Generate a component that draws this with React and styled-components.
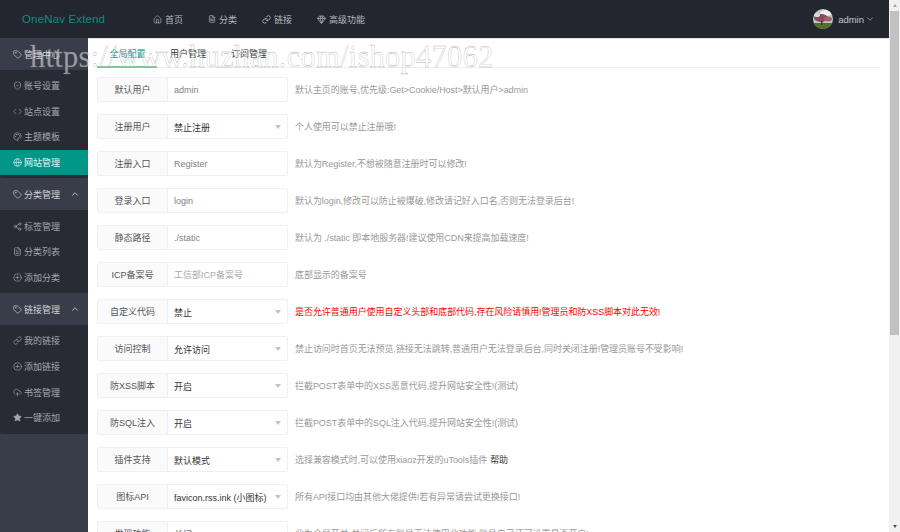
import styled, { createGlobalStyle } from 'styled-components';
import { ChevronDown, ChevronUp, Link, Share2, Star, Tag, ShieldCheck, Code, Palette, Globe, Home, Gem, FileText, CloudUpload, CirclePlus } from 'lucide-react';

const GlobalStyle = createGlobalStyle`
   html, body {
      margin: 0;
      height: 100%;
      overflow: hidden;
      background: #fff;
   }
   * {
      box-sizing: border-box;
   }
   #root {
      height: 100%;
   }
`;

const Page = styled.div`
   position: relative;
   display: flex;
   height: 532px;
   overflow: hidden;
   font-family: "Liberation Sans", "Noto Sans CJK SC", sans-serif;
   font-size: 9px;
`;

const Frame = styled.div`
   flex: 1;
   min-width: 0;
   display: flex;
   flex-direction: column;
`;

const Header = styled.header`
   flex: none;
   height: 38px;
   display: flex;
   align-items: center;
   background: #23262f;
`;

const Logo = styled.div`
   width: 153px;
   padding-left: 22px;
   color: #0a8f7c;
   font-size: 11.5px;
   letter-spacing: 0.15px;
`;

const TopNav = styled.nav`
   display: flex;
   flex: 1;
   gap: 25px;
`;

const TopLink = styled.a`
   display: flex;
   align-items: center;
   gap: 3px;
   color: #b5b8bd;
   font-size: 9px;
`;

const User = styled.div`
   display: flex;
   align-items: center;
   padding-right: 14px;
   color: #c2c5ca;
   font-size: 9.5px;
`;

const UserCaret = styled(ChevronDown)`
   margin-left: 1px;
`;

const Avatar = styled.svg`
   width: 20px;
   height: 20px;
   margin-right: 5px;
   border-radius: 50%;
`;

const Body = styled.div`
   flex: 1;
   min-height: 0;
   display: flex;
`;

const Sidebar = styled.aside`
   flex: none;
   width: 88px;
   background: #393d49;
`;

const GroupTitle = styled.div`
   height: 32px;
   display: flex;
   align-items: center;
   gap: 2px;
   padding-left: 13px;
   color: #d0d2d6;
`;

const Caret = styled(ChevronUp)`
   margin-left: 8px;
`;

const SubMenu = styled.div`
   padding: 3px 0;
   background: #282b33;
   border-radius: 0 0 2px 2px;
`;

const MenuItem = styled.div`
   height: 25.6px;
   display: flex;
   align-items: center;
   gap: 2px;
   padding-left: 13px;
   color: ${p => (p.$active ? '#e6f4f2' : '#a3a6ac')};
   background: ${p => (p.$active ? '#009688' : 'transparent')};
`;

const Main = styled.main`
   flex: 1;
   min-width: 0;
   padding: 0 9px;
   background: #fff;
   border-top: 1px solid #e4e4e4;
   overflow: hidden;
`;

const Tabs = styled.div`
   display: flex;
   height: 29px;
   border-bottom: 1px solid #eee;
`;

const Tab = styled.div`
   width: ${p => (p.$active ? '60px' : '61px')};
   height: 29px;
   padding-top: 8px;
   padding-left: 1px;
   text-align: center;
   color: ${p => (p.$active ? '#009688' : '#333')};
   border-bottom: ${p => (p.$active ? '2px solid #7fc79a' : 'none')};
`;

const Form = styled.div`
   padding-top: 9px;
`;

const Row = styled.div`
   height: 37px;
   display: flex;
   align-items: flex-start;
`;

const Field = styled.div`
   flex: none;
   width: 191px;
   height: 25px;
   display: flex;
   border: 1px solid #f0f0f0;
   border-radius: 2px;
`;

const Label = styled.div`
   flex: none;
   width: 70px;
   padding-bottom: 1px;
   display: flex;
   align-items: center;
   justify-content: center;
   color: #555;
   background: #fafafa;
   border-right: 1px solid #eee;
`;

const Value = styled.div`
   flex: 1;
   display: flex;
   align-items: center;
   justify-content: space-between;
   padding: ${p => (p.$select ? '1px 6px 0 6px' : '0 6px')};
   color: ${p => (p.$select ? '#333' : p.$placeholder ? '#aaa' : '#808080')};
   white-space: nowrap;
`;

const Arrow = styled.span`
   width: 0;
   height: 0;
   border-style: solid;
   border-width: 4px 3.5px 0;
   border-color: #c2c2c2 transparent transparent;
`;

const Hint = styled.div`
   height: 25px;
   padding-bottom: 1px;
   display: flex;
   align-items: center;
   margin-left: 7px;
   white-space: nowrap;
   letter-spacing: -0.05px;
   color: ${p => (p.$danger ? '#f00' : '#999')};
`;

const HelpLink = styled.a`
   margin-left: 3px;
   color: #333;
`;

const ScrollBar = styled.div`
   flex: none;
   width: 11px;
   display: flex;
   flex-direction: column;
   align-items: center;
   background: #f1f1f1;
`;

const ScrollUp = styled.span`
   flex: none;
   margin-top: 4px;
   width: 0;
   height: 0;
   border-style: solid;
   border-width: 0 2.5px 3px;
   border-color: transparent transparent #a3a3a3;
`;

const ScrollThumb = styled.div`
   flex: none;
   width: 9px;
   height: 324px;
   margin-top: 4px;
   background: #c1c1c1;
`;

const ScrollDown = styled.span`
   flex: none;
   margin-top: auto;
   margin-bottom: 4px;
   width: 0;
   height: 0;
   border-style: solid;
   border-width: 3px 2.5px 0;
   border-color: #505050 transparent transparent;
`;

const Watermark = styled.div`
   position: absolute;
   left: 30px;
   top: 40px;
   font-family: "Liberation Serif", serif;
   font-size: 30.5px;
   letter-spacing: 0.24px;
   white-space: nowrap;
   color: rgba(255, 255, 255, 0.5);
   -webkit-text-stroke: 0.35px rgba(120, 120, 120, 0.6);
   pointer-events: none;
`;

const menus = [
   {
      title: '管理中心',
      items: [
         { icon: ShieldCheck, text: '账号设置' },
         { icon: Code, text: '站点设置' },
         { icon: Palette, text: '主题模板' },
         { icon: Globe, text: '网站管理', active: true },
      ],
   },
   {
      title: '分类管理',
      caret: true,
      items: [
         { icon: Share2, text: '标签管理' },
         { icon: FileText, text: '分类列表' },
         { icon: CirclePlus, text: '添加分类' },
      ],
   },
   {
      title: '链接管理',
      caret: true,
      items: [
         { icon: Link, text: '我的链接' },
         { icon: CirclePlus, text: '添加链接' },
         { icon: CloudUpload, text: '书签管理' },
         { icon: Star, text: '一键添加', fill: true },
      ],
   },
];

const rows = [
   { label: '默认用户', value: 'admin', hint: '默认主页的账号,优先级:Get>Cookie/Host>默认用户>admin' },
   { label: '注册用户', value: '禁止注册', select: true, hint: '个人使用可以禁止注册哦!' },
   { label: '注册入口', value: 'Register', hint: '默认为Register,不想被随意注册时可以修改!' },
   { label: '登录入口', value: 'login', hint: '默认为login,修改可以防止被爆破,修改请记好入口名,否则无法登录后台!' },
   { label: '静态路径', value: './static', hint: '默认为 ./static 即本地服务器!建议使用CDN来提高加载速度!' },
   { label: 'ICP备案号', value: '工信部ICP备案号', placeholder: true, hint: '底部显示的备案号' },
   { label: '自定义代码', value: '禁止', select: true, danger: true, hint: '是否允许普通用户使用自定义头部和底部代码,存在风险请慎用!管理员和防XSS脚本对此无效!' },
   { label: '访问控制', value: '允许访问', select: true, hint: '禁止访问时首页无法预览,链接无法跳转,普通用户无法登录后台,同时关闭注册!管理员账号不受影响!' },
   { label: '防XSS脚本', value: '开启', select: true, hint: '拦截POST表单中的XSS恶意代码,提升网站安全性!(测试)' },
   { label: '防SQL注入', value: '开启', select: true, hint: '拦截POST表单中的SQL注入代码,提升网站安全性!(测试)' },
   { label: '插件支持', value: '默认模式', select: true, hint: '选择兼容模式时,可以使用xiaoz开发的uTools插件', help: '帮助' },
   { label: '图标API', value: 'favicon.rss.ink (小图标)', select: true, hint: '所有API接口均由其他大佬提供!若有异常请尝试更换接口!' },
   { label: '发现功能', value: '关闭', select: true, hint: '此为全局开关,关闭后所有账号无法使用此功能,账号自己还可设置是否开启!' },
];

export default function App() {
   return (
      <Page>
         <GlobalStyle />
         <Frame>
            <Header>
               <Logo>OneNav Extend</Logo>
               <TopNav>
                  <TopLink><Home size={9} strokeWidth={1.6} />首页</TopLink>
                  <TopLink><FileText size={8} strokeWidth={2} />分类</TopLink>
                  <TopLink><Link size={9} strokeWidth={2.2} />链接</TopLink>
                  <TopLink><Gem size={9} strokeWidth={2} />高级功能</TopLink>
               </TopNav>
               <User>
                  <Avatar viewBox="0 0 20 20">
                     <rect width="20" height="20" fill="#b9c9cf" />
                     <ellipse cx="13" cy="4" rx="6" ry="3" fill="#eceef0" />
                     <rect y="14" width="20" height="6" fill="#55701f" />
                     <ellipse cx="8" cy="9" rx="7" ry="4" fill="#8e4a58" />
                     <ellipse cx="15" cy="10" rx="4" ry="2.5" fill="#a5606a" />
                     <ellipse cx="4" cy="6" rx="3" ry="2" fill="#d9dcd8" />
                     <rect x="8" y="12" width="1.5" height="4" fill="#4a3327" />
                  </Avatar>
                  admin
                  <UserCaret size={10} strokeWidth={1.5} />
               </User>
            </Header>
            <Body>
               <Sidebar>
                  {menus.map(menu => (
                     <div key={menu.title}>
                        <GroupTitle>
                           <Tag size={9} strokeWidth={1.7} />
                           {menu.title}
                           {menu.caret && <Caret size={10} strokeWidth={2} />}
                        </GroupTitle>
                        <SubMenu>
                           {menu.items.map(item => (
                              <MenuItem key={item.text} $active={item.active}>
                                 <item.icon size={9} strokeWidth={1.7} fill={item.fill ? 'currentColor' : 'none'} />
                                 {item.text}
                              </MenuItem>
                           ))}
                        </SubMenu>
                     </div>
                  ))}
               </Sidebar>
               <Main>
                  <Tabs>
                     <Tab $active>全局配置</Tab>
                     <Tab>用户管理</Tab>
                     <Tab>订阅管理</Tab>
                  </Tabs>
                  <Form>
                     {rows.map(row => (
                        <Row key={row.label}>
                           <Field>
                              <Label>{row.label}</Label>
                              <Value $select={row.select} $placeholder={row.placeholder}>
                                 {row.value}
                                 {row.select && <Arrow />}
                              </Value>
                           </Field>
                           <Hint $danger={row.danger}>
                              {row.hint}
                              {row.help && <HelpLink>{row.help}</HelpLink>}
                           </Hint>
                        </Row>
                     ))}
                  </Form>
               </Main>
            </Body>
         </Frame>
         <ScrollBar>
            <ScrollUp />
            <ScrollThumb />
            <ScrollDown />
         </ScrollBar>
         <Watermark>https://www.huzhan.com/ishop47062</Watermark>
      </Page>
   );
}
